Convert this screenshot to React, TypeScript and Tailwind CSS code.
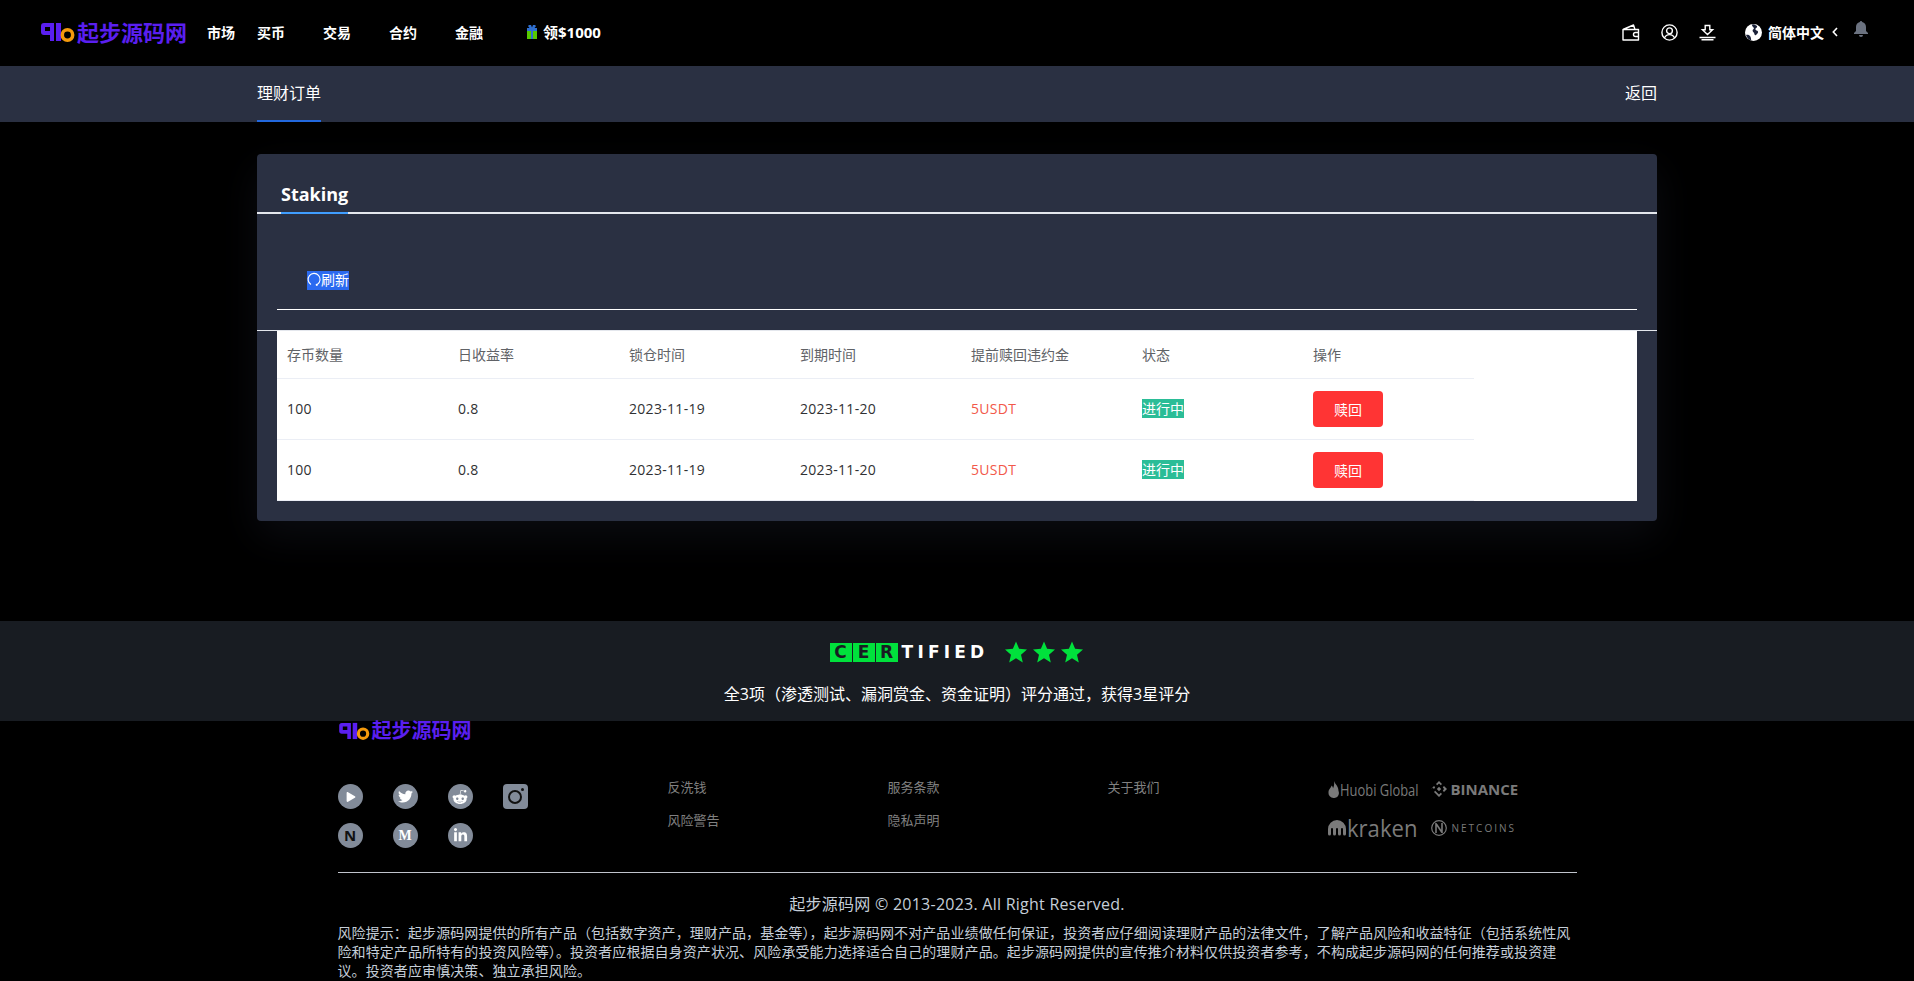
import React from "react";
import { FaPlay, FaTwitter, FaRedditAlien, FaLinkedinIn } from "react-icons/fa";

const Logo = ({ small }: { small?: boolean }) => (
  <div className={small ? "flex items-center h-[20px]" : "flex items-center h-[22px]"}>
    <svg width={small ? 33 : 36} height={small ? 18 : 20} viewBox="0 0 36 20" className="shrink-0">
      <path fillRule="evenodd" d="M4 1h10v18h-4v-6H4a3 3 0 0 1-3-3V4a3 3 0 0 1 3-3zM5 5v4h5V5z" fill="#5a1ff0" />
      <rect x="16" y="1" width="5" height="18" fill="#5a1ff0" />
      <circle cx="27.500" cy="13" r="5.200" fill="none" stroke="#f59a0c" strokeWidth="3.500" />
    </svg>
    <span className={small ? "text-[20px] leading-[20px] font-bold text-[#5a1ff0] ml-[1px]" : "text-[22px] leading-[22px] font-bold text-[#5a1ff0] ml-[1px]"}>起步源码网</span>
  </div>
);

const Wallet = () => (
  <svg width="18" height="17" viewBox="0 0 18 17" fill="none" stroke="white" strokeWidth="1.400">
    <path d="M1 5.500h15.500v10.500H1zM1 5.500 11.500 1l1.500 4.500" strokeLinejoin="round" />
    <path d="M16.500 8.500h-3a2 2 0 0 0 0 4h3" />
  </svg>
);
const User = () => (
  <svg width="17" height="17" viewBox="0 0 17 17" fill="none" stroke="white" strokeWidth="1.400">
    <circle cx="8.500" cy="8.500" r="7.600" />
    <circle cx="8.500" cy="6.800" r="2.900" />
    <path d="M3.400 14c1-2.400 2.900-3.400 5.100-3.400s4.100 1 5.100 3.400" />
  </svg>
);
const Download = () => (
  <svg width="17" height="17" viewBox="0 0 17 17" fill="none" stroke="white" strokeWidth="1.400">
    <path d="M6.200 1.500h4.600v4.200h2.800L8.500 10.500 3.400 5.700h2.800z" />
    <path d="M.5 13.500h16M2.500 15.800h12" />
  </svg>
);
const Globe = () => (
  <svg width="17" height="17" viewBox="0 0 17 17">
    <circle cx="8.500" cy="8.500" r="8.500" fill="white" />
    <path d="M9 .2c1.600 1 3.400 1.400 3.200 2.600-.2 1-2 1.400-1.800 2.600.2.900 2 .9 2.600 2 .6 1.300-1.200 3-2.400 3.800-.8.500-1.200-1-1.500-2.200-.3-1-1.600-1.400-1.500-2.600.1-1 1.500-1.200 1.300-2.300C8.200 3 6.800 2.400 7 .5zM1 11c1.400-.4 3-.2 4 1 1 1.300 1 2.800 1.200 4.500C4 16 2 14 1 11z" fill="#1a2138" />
  </svg>
);
const Bell = () => (
  <svg width="14" height="16" viewBox="0 0 14 16" fill="#6b7280">
    <path d="M7 0a1.200 1.200 0 0 1 1.200 1.100C10.600 1.700 12 3.700 12 6v4l2 2v1H0v-1l2-2V6c0-2.300 1.400-4.300 3.800-4.900A1.200 1.200 0 0 1 7 0zM5 14h4a2 2 0 0 1-4 0z" />
  </svg>
);
const Gift = () => (
  <svg width="10" height="14" viewBox="0 0 10 14">
    <path d="M2 0h2l1 2.500L6 0h2l1 1-1.500 2H10v3H0V3h2.500L1 1z" fill="#2f6fd0" />
    <rect x="0" y="6" width="10" height="8" fill="#56c800" />
    <rect x="4" y="3" width="2" height="11" fill="#2f6fd0" />
  </svg>
);
const Star = () => (
  <svg width="24" height="24" viewBox="0 0 24 24" fill="#00e13c">
    <path d="M12 1.500l3.100 7.300 7.900.7-6 5.200 1.800 7.800L12 18.300l-6.800 4.200L7 14.700 1 9.500l7.900-.7z" />
  </svg>
);
const Refresh = () => (
  <svg width="14" height="15" viewBox="0 0 14 15" fill="none" stroke="white" strokeWidth="1.100">
    <path d="M4 12.500A6 6 0 1 1 10.500 12.300" />
    <circle cx="9.800" cy="12.800" r=".6" fill="white" />
  </svg>
);
const Chevron = () => (
  <svg width="6" height="10" viewBox="0 0 6 10" fill="none" stroke="white" strokeWidth="1.600">
    <path d="M5 1 1.300 5 5 9" />
  </svg>
);

const BinanceIcon = () => (
  <svg width="16" height="16" viewBox="0 0 16 16" fill="#7a7a7a" className="shrink-0">
    <path d="M8 0l3 3-1.200 1.200L8 2.400 6.200 4.200 5 3zM3 5l1.200 1.200L3 8 1.800 6.800 0 8l3-3zM13 5l3 3-3 3-1.200-1.200L13 8l-1.200-1.800zM8 5.800 10.200 8 8 10.200 5.800 8zM3 11l1.200-1.200L6.200 11.800 8 13.600l1.800-1.800L11 13l-3 3-3-3z" />
  </svg>
);
const KrakenIcon = () => (
  <svg width="18" height="16" viewBox="0 0 18 16" fill="#7a7a7a" className="shrink-0">
    <path d="M9 0a9 9 0 0 1 9 9v5a1.500 1.500 0 0 1-3 0V9a1 1 0 0 0-2 0v5a1.500 1.500 0 0 1-3 0V9a1 1 0 0 0-2 0v5a1.500 1.500 0 0 1-3 0V9a1 1 0 0 0-2 0v5a1.500 1.500 0 0 1-3 0V9a9 9 0 0 1 9-9z" />
  </svg>
);
const NetcoinsIcon = () => (
  <svg width="16" height="16" viewBox="0 0 16 16" fill="none" stroke="#7a7a7a" strokeWidth="1.200" className="shrink-0">
    <circle cx="8" cy="8" r="7.300" />
    <path d="M5 3v10M11 3v10M5 3.500l6 9" strokeWidth="1.600" />
  </svg>
);
const FlameIcon = () => (
  <svg width="11" height="17" viewBox="0 0 11 17" fill="#7a7a7a" className="shrink-0">
    <path d="M6 0c1 3 4.500 5 4.500 10A5 5 0 0 1 5.500 17 5 5 0 0 1 .5 11.500C.5 8 3 7 3.500 4.500c1 .8 1.500 1.800 1.500 3C6 5.500 6.500 3 6 0z" />
  </svg>
);

const headers = ["存币数量", "日收益率", "锁仓时间", "到期时间", "提前赎回违约金", "状态", "操作"];

const Row = () => (
  <div className="grid grid-cols-[repeat(7,171px)] w-[1197px] h-[61px] items-center border-b border-[#ebeef5] text-[14px] text-[#303133] tracking-[0.3px]">
    <div className="pl-[10px] pb-[2px]">100</div>
    <div className="pl-[10px] pb-[2px]">0.8</div>
    <div className="pl-[10px] pb-[2px]">2023-11-19</div>
    <div className="pl-[10px] pb-[2px]">2023-11-20</div>
    <div className="pl-[10px] pb-[2px] text-[#f2584a]">5USDT</div>
    <div className="pl-[10px] pb-[2px] tracking-normal"><span className="bg-[#2bbd97] text-white">进行中</span></div>
    <div className="pl-[10px] tracking-normal">
      <button className="w-[70px] h-[36px] bg-[#ff3434] text-white rounded-[4px] text-[14px]">赎回</button>
    </div>
  </div>
);

const Social = ({ children }: { children: React.ReactNode }) => (
  <div className="w-[25px] h-[25px] rounded-full bg-[#828b99] flex items-center justify-center text-white">{children}</div>
);

export default function App() {
  return (
    <div className="h-[981px] w-full overflow-hidden bg-black text-white" style={{ fontFamily: '"Open Sans","Noto Sans CJK SC",sans-serif' }}>
      <header className="h-[66px] flex items-center pl-[40px] pr-[46px] pb-[2px] bg-black">
        <Logo />
        <nav className="flex items-center text-[14px] font-bold ml-[20px]">
          <span>市场</span>
          <span className="ml-[22px]">买币</span>
          <span className="ml-[38px]">交易</span>
          <span className="ml-[38px]">合约</span>
          <span className="ml-[38px]">金融</span>
          <span className="ml-[44px] flex items-center gap-[6px]"><Gift /><span className="text-[15px]">领$1000</span></span>
        </nav>
        <div className="ml-auto flex items-center">
          <Wallet />
          <span className="ml-[21px]"><User /></span>
          <span className="ml-[21px]"><Download /></span>
          <span className="ml-[29px]"><Globe /></span>
          <span className="ml-[6px] text-[14px] font-bold">简体中文</span>
          <span className="ml-[8px]"><Chevron /></span>
          <span className="ml-[16px] -mt-[6px]"><Bell /></span>
        </div>
      </header>

      <div className="h-[56px] bg-[#2a3042]">
        <div className="w-[1400px] mx-auto h-full flex justify-between items-center">
          <div className="h-full flex items-center border-b-2 border-[#2268de] text-[16px] w-[64px]">理财订单</div>
          <div className="text-[16px] pb-[2px]">返回</div>
        </div>
      </div>

      <main className="h-[499px] pt-[32px]">
        <div className="w-[1400px] mx-auto h-[367px] bg-[#2a3042] rounded-[4px] shadow-[0_15px_40px_rgba(42,48,66,0.25)]">
          <div className="h-[60px] border-b-2 border-[#e4e7ed] pl-[24px] flex items-end">
            <div className="text-[18px] leading-[32px] font-bold border-b-2 border-[#409eff] -mb-[2px] h-[36px]">Staking</div>
          </div>
          <div className="h-[117px] border-b border-[#e4e7ed]">
            <div className="mx-[20px] h-[96px] border-b border-white pl-[30px] pt-[55px]">
              <span className="inline-flex items-center h-[19px] bg-[#2b6af0] text-[14px] leading-[17px] pb-[2px]"><Refresh />刷新</span>
            </div>
          </div>
          <div className="mx-[20px] bg-white h-[170px]">
            <div className="grid grid-cols-[repeat(7,171px)] w-[1197px] h-[48px] items-center border-b border-[#ebeef5] text-[14px] text-[#606266]">
              {headers.map((h) => <div key={h} className="pl-[10px]">{h}</div>)}
            </div>
            <Row />
            <Row />
          </div>
        </div>
      </main>

      <section className="h-[100px] bg-[#181c22] flex flex-col items-center pt-[19px]">
        <div className="flex items-center h-[24px]">
          <div className="flex gap-[1px]">
            {["C", "E", "R"].map((c) => (
              <span key={c} className="w-[22px] h-[19px] bg-[#00e13c] flex items-center justify-center text-[#181c22] text-[17px] leading-none font-black" style={{ fontFamily: '"DejaVu Sans",sans-serif' }}>{c}</span>
            ))}
          </div>
          <span className="ml-[4px] text-[17px] font-bold tracking-[4.2px] leading-none" style={{ fontFamily: '"DejaVu Sans",sans-serif' }}>TIFIED</span>
          <span className="ml-[16px] flex gap-[4px]"><Star /><Star /><Star /></span>
        </div>
        <div className="mt-[18px] text-[16px] leading-[24px]">全3项（渗透测试、漏洞赏金、资金证明）评分通过，获得3星评分</div>
      </section>

      <footer className="w-[1239px] mx-auto">
        <Logo small />
        <div className="grid grid-cols-[330px_220px_220px_220px_249px] mt-[43px]">
          <div className="grid grid-cols-[repeat(4,55px)] gap-y-[14px]">
            <Social><FaPlay size={10} className="ml-[1px]" /></Social>
            <Social><FaTwitter size={15} /></Social>
            <Social><FaRedditAlien size={16} /></Social>
            <div className="w-[25px] h-[25px] rounded-[4px] bg-[#828b99] flex items-center justify-center relative">
              <div className="w-[14px] h-[14px] rounded-full border-2 border-[#111]" />
              <div className="absolute w-[3px] h-[3px] rounded-full bg-[#111] top-[4px] right-[4px]" />
            </div>
            <Social><span className="text-[#111] text-[15px] font-bold">N</span></Social>
            <Social><span className="text-[14px] font-bold" style={{ fontFamily: '"Liberation Serif",serif' }}>M</span></Social>
            <Social><FaLinkedinIn size={15} /></Social>
          </div>
          <div className="-mt-[6px] text-[13px] text-[#808080] leading-[18px] flex flex-col gap-[15px]"><span>反洗钱</span><span>风险警告</span></div>
          <div className="-mt-[6px] text-[13px] text-[#808080] leading-[18px] flex flex-col gap-[15px]"><span>服务条款</span><span>隐私声明</span></div>
          <div className="-mt-[6px] text-[13px] text-[#808080] leading-[18px]"><span>关于我们</span></div>
          <div className="grid grid-cols-[103px_90px] content-start gap-y-[19px] -mt-[5px] text-[#7a7a7a]">
            <div className="h-[20px] flex items-center">
              <FlameIcon />
              <span className="ml-[1px] text-[17px] leading-none inline-block origin-left scale-x-[0.76] whitespace-nowrap">Huobi Global</span>
            </div>
            <div className="h-[20px] flex items-center">
              <BinanceIcon />
              <span className="ml-[4px] text-[15px] leading-none font-bold">BINANCE</span>
            </div>
            <div className="h-[20px] flex items-center">
              <KrakenIcon />
              <span className="ml-[1px] text-[24px] leading-none inline-block origin-left scale-x-[0.92]">kraken</span>
            </div>
            <div className="h-[20px] flex items-center">
              <NetcoinsIcon />
              <span className="ml-[5px] text-[10px] leading-none tracking-[2px] whitespace-nowrap">NETCOINS</span>
            </div>
          </div>
        </div>
        <div className="mt-[24px] h-[1px] bg-[#c0c4cc]" />
        <div className="mt-[20px] text-center text-[16px] leading-[22px] tracking-[0.25px] text-[#c5ced8]">起步源码网 © 2013-2023. All Right Reserved.</div>
        <div className="mt-[8px] text-[14px] leading-[19px] tracking-[0.09px] text-[#c5ced8] whitespace-nowrap">
          <div>风险提示：起步源码网提供的所有产品（包括数字资产，理财产品，基金等），起步源码网不对产品业绩做任何保证，投资者应仔细阅读理财产品的法律文件，了解产品风险和收益特征（包括系统性风</div>
          <div>险和特定产品所特有的投资风险等）。投资者应根据自身资产状况、风险承受能力选择适合自己的理财产品。起步源码网提供的宣传推介材料仅供投资者参考，不构成起步源码网的任何推荐或投资建</div>
          <div>议。投资者应审慎决策、独立承担风险。</div>
        </div>
      </footer>
    </div>
  );
}
